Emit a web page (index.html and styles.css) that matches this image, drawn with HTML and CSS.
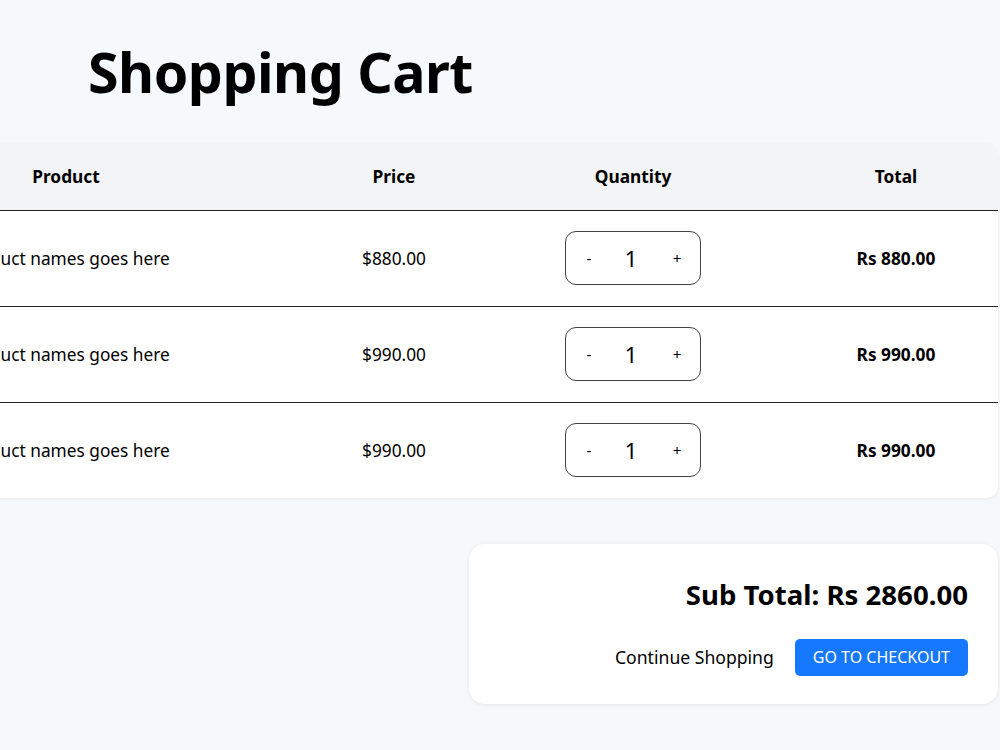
FILE: index.html
```html
<!DOCTYPE html>
<html lang="en">
<head>
    <meta charset="UTF-8">
    <meta name="viewport" content="width=device-width, initial-scale=1.0">
    <title>Shopping Cart</title>
    <link rel="stylesheet" href="styles.css">
</head>
<body>
    <div class="cart-page">
        <h1 class="cart-title">Shopping Cart</h1>

        <div class="cart-table">
            <div class="cart-row cart-head">
                <div class="cell">Product</div>
                <div class="cell">Price</div>
                <div class="cell">Quantity</div>
                <div class="cell">Total</div>
            </div>

            <div class="cart-row">
                <div class="cell">Product names goes here</div>
                <div class="cell">$880.00</div>
                <div class="cell">
                    <div class="qty-box">
                        <button class="qty-btn">-</button>
                        <span class="qty-value">1</span>
                        <button class="qty-btn">+</button>
                    </div>
                </div>
                <div class="cell cell-total">Rs 880.00</div>
            </div>

            <div class="cart-row">
                <div class="cell">Product names goes here</div>
                <div class="cell">$990.00</div>
                <div class="cell">
                    <div class="qty-box">
                        <button class="qty-btn">-</button>
                        <span class="qty-value">1</span>
                        <button class="qty-btn">+</button>
                    </div>
                </div>
                <div class="cell cell-total">Rs 990.00</div>
            </div>

            <div class="cart-row">
                <div class="cell">Product names goes here</div>
                <div class="cell">$990.00</div>
                <div class="cell">
                    <div class="qty-box">
                        <button class="qty-btn">-</button>
                        <span class="qty-value">1</span>
                        <button class="qty-btn">+</button>
                    </div>
                </div>
                <div class="cell cell-total">Rs 990.00</div>
            </div>
        </div>

        <div class="summary">
            <div class="summary-card">
                <h2 class="sub-total">Sub Total: Rs 2860.00</h2>
                <div class="summary-actions">
                    <a class="continue-link" href="#">Continue Shopping</a>
                    <button class="checkout-button">GO TO CHECKOUT</button>
                </div>
            </div>
        </div>
    </div>
</body>
</html>
```

FILE: styles.css
```css
* {
    margin: 0;
    padding: 0;
    box-sizing: border-box;
}

body {
    font-family: "Noto Sans", "Open Sans", sans-serif;
    background: #f6f9fc;
    color: #000000;
    overflow: hidden;
}

.cart-page {
    padding: 0 2px 40px 0;
}

.cart-title {
    font-size: 55.5px;
    font-weight: bold;
    line-height: 1;
    padding: 44px 0 0 88px;
    margin-bottom: 44px;
    letter-spacing: -0.5px;
}

/* table card pushed past the left edge, like the original page */
.cart-table {
    margin-left: -184px;
    background: #ffffff;
    border-radius: 0 12px 12px 0;
    box-shadow: 0 1px 4px rgba(0, 0, 0, 0.06);
    overflow: hidden;
}

.cart-row {
    display: grid;
    grid-template-columns: 500px 156px 322px 1fr;
    height: 96px;
    border-bottom: 1px solid #222222;
    font-size: 17.3px;
}

.cart-row:last-child {
    border-bottom: none;
    height: 95px;
}

.cart-head {
    height: 67px;
    background: #f3f4f6;
    font-weight: bold;
}

.cell {
    display: flex;
    align-items: center;
    justify-content: center;
}

.cell-total {
    font-weight: bold;
}

.qty-box {
    width: 136px;
    height: 54px;
    border: 1px solid #444444;
    border-radius: 11px;
    display: flex;
    align-items: center;
    justify-content: space-between;
    padding: 0 12px;
}

.qty-btn {
    background: none;
    border: none;
    font-family: inherit;
    font-size: 15px;
    width: 22px;
    cursor: pointer;
}

.qty-value {
    font-size: 22px;
    margin-left: -4px;
}

.summary {
    display: flex;
    justify-content: flex-end;
    margin-top: 46px;
}

.summary-card {
    width: 529px;
    background: #ffffff;
    border-radius: 16px;
    box-shadow: 0 1px 4px rgba(0, 0, 0, 0.08);
    padding: 30px 30px 28px;
    text-align: right;
}

.sub-total {
    font-size: 27.6px;
    font-weight: bold;
    line-height: 40px;
    margin-bottom: 25px;
}

.summary-actions {
    display: flex;
    justify-content: flex-end;
    align-items: center;
    gap: 21px;
}

.continue-link {
    color: #000000;
    text-decoration: none;
    font-size: 17.6px;
}

.checkout-button {
    background: #1677ff;
    color: #ffffff;
    border: none;
    border-radius: 5px;
    height: 37px;
    padding: 0 18px;
    font-family: inherit;
    font-size: 16px;
    cursor: pointer;
}
```
